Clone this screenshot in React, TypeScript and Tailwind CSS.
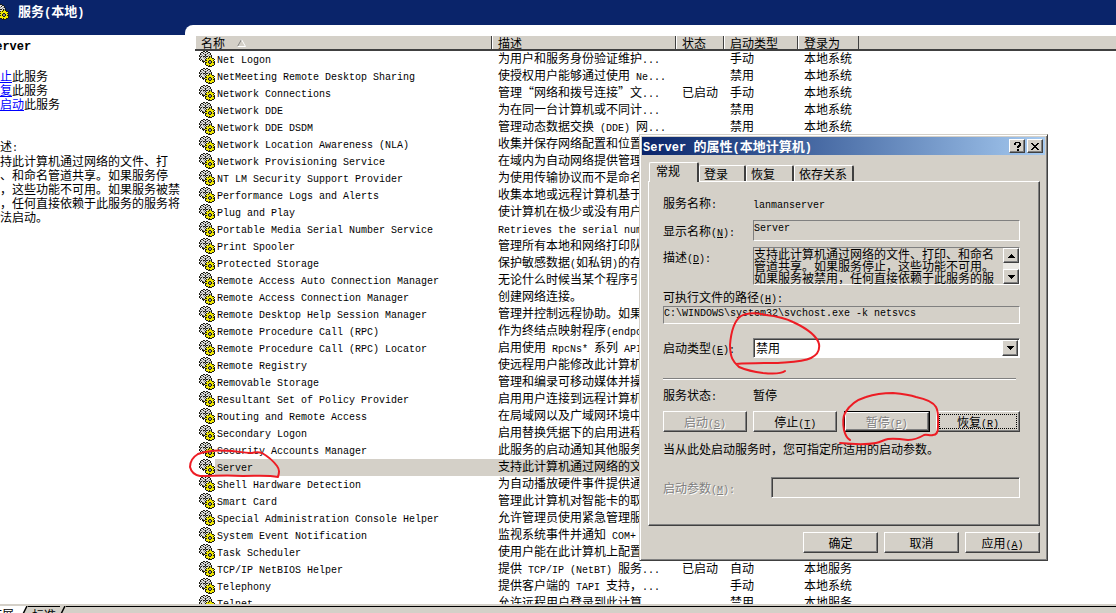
import React from 'react';
import clsx from 'clsx';

type Service = {
  name: string;
  desc: string;
  status?: string;
  startup?: string;
  logon?: string;
};

const services: Service[] = [
  { name: 'Net Logon', desc: '为用户和服务身份验证维护...', startup: '手动', logon: '本地系统' },
  { name: 'NetMeeting Remote Desktop Sharing', desc: '使授权用户能够通过使用 Ne...', startup: '禁用', logon: '本地系统' },
  { name: 'Network Connections', desc: '管理“网络和拨号连接”文...', status: '已启动', startup: '手动', logon: '本地系统' },
  { name: 'Network DDE', desc: '为在同一台计算机或不同计...', startup: '禁用', logon: '本地系统' },
  { name: 'Network DDE DSDM', desc: '管理动态数据交换 (DDE) 网...', startup: '禁用', logon: '本地系统' },
  { name: 'Network Location Awareness (NLA)', desc: '收集并保存网络配置和位置' },
  { name: 'Network Provisioning Service', desc: '在域内为自动网络提供管理' },
  { name: 'NT LM Security Support Provider', desc: '为使用传输协议而不是命名' },
  { name: 'Performance Logs and Alerts', desc: '收集本地或远程计算机基于' },
  { name: 'Plug and Play', desc: '使计算机在极少或没有用户' },
  { name: 'Portable Media Serial Number Service', desc: 'Retrieves the serial num' },
  { name: 'Print Spooler', desc: '管理所有本地和网络打印队' },
  { name: 'Protected Storage', desc: '保护敏感数据(如私钥)的存' },
  { name: 'Remote Access Auto Connection Manager', desc: '无论什么时候当某个程序引' },
  { name: 'Remote Access Connection Manager', desc: '创建网络连接。' },
  { name: 'Remote Desktop Help Session Manager', desc: '管理并控制远程协助。如果' },
  { name: 'Remote Procedure Call (RPC)', desc: '作为终结点映射程序(endpo' },
  { name: 'Remote Procedure Call (RPC) Locator', desc: '启用使用 RpcNs* 系列 API' },
  { name: 'Remote Registry', desc: '使远程用户能修改此计算机' },
  { name: 'Removable Storage', desc: '管理和编录可移动媒体并操' },
  { name: 'Resultant Set of Policy Provider', desc: '启用用户连接到远程计算机' },
  { name: 'Routing and Remote Access', desc: '在局域网以及广域网环境中' },
  { name: 'Secondary Logon', desc: '启用替换凭据下的启用进程' },
  { name: 'Security Accounts Manager', desc: '此服务的启动通知其他服务' },
  { name: 'Server', desc: '支持此计算机通过网络的文' },
  { name: 'Shell Hardware Detection', desc: '为自动播放硬件事件提供通' },
  { name: 'Smart Card', desc: '管理此计算机对智能卡的取' },
  { name: 'Special Administration Console Helper', desc: '允许管理员使用紧急管理服' },
  { name: 'System Event Notification', desc: '监视系统事件并通知 COM+' },
  { name: 'Task Scheduler', desc: '使用户能在此计算机上配置' },
  { name: 'TCP/IP NetBIOS Helper', desc: '提供 TCP/IP (NetBT) 服务...', status: '已启动', startup: '自动', logon: '本地服务' },
  { name: 'Telephony', desc: '提供客户端的 TAPI 支持，...', startup: '手动', logon: '本地系统' },
  { name: 'Telnet', desc: '允许远程用户登录到此计算', startup: '禁用', logon: '本地服务' },
];

const raised =
  'border border-t-white border-l-white border-r-[#404040] border-b-[#404040] shadow-[inset_-1px_-1px_0_#808080] bg-[#d4d0c8]';
const sunkenThin = 'border border-t-[#808080] border-l-[#808080] border-r-white border-b-white bg-[#d4d0c8]';
const sunken =
  'border border-t-[#808080] border-l-[#808080] border-r-white border-b-white shadow-[inset_1px_1px_0_#404040]';

// Half-width runs are set in the mono face so that two of them fill one ideograph
const Mixed = ({ text, bold = false }: { text: string; bold?: boolean }) => (
  <>
    {text.split(/([\x20-\x7e]+)/).map((part, i) =>
      i % 2 === 1 ? (
        <span
          key={i}
          className={clsx(
            "leading-none whitespace-pre font-['Liberation_Mono',monospace]",
            bold ? 'text-[12px]' : 'text-[10px]'
          )}
        >
          {part}
        </span>
      ) : (
        part
      )
    )}
  </>
);

const Accel = ({ label, letter, colon = false }: { label: string; letter: string; colon?: boolean }) => (
  <>
    {label}
    <span className="font-['Liberation_Mono',monospace] text-[10px] leading-none">
      (<u>{letter}</u>){colon && ':'}
    </span>
  </>
);

const gearBitmap = [
  '....kk.kk.......',
  '..kkwwkwwkk.....',
  '.kwwkwwwkwwk....',
  '.kgwwgkgwwgk....',
  'kwwgwwkwwgwwk...',
  'kgkwkkgkkwkgk...',
  '.kwwgwkwwykyk...',
  'kgwwwgwkykyyykk.',
  'kwkwwwkyyyyyyyyk',
  '.k.kgwkkyykkyyk.',
  '...kkkyyykggkyyk',
  '....k.kkykggkykk',
  '......kyyykkyyyk',
  '......kyyyyyyyyk',
  '.......kkykyykk.',
  '.........kkkk...',
];

const gearColours: Record<string, string> = { k: '#1c1c14', g: '#8c8c8c', w: '#dcdcdc', y: '#f0e800' };

const gearPaths = Object.keys(gearColours).map((key) => ({
  fill: gearColours[key],
  d: gearBitmap
    .flatMap((row, y) => [...row].map((c, x) => (c === key ? `M${x} ${y}h1v1h-1z` : '')))
    .join(''),
}));

const GearIcon = () => (
  <svg viewBox="0 0 16 16" className="h-4 w-4 shrink-0" shapeRendering="crispEdges" aria-hidden="true">
    {gearPaths.map((p) => (
      <path key={p.fill} d={p.d} fill={p.fill} />
    ))}
  </svg>
);

const Arrow = ({ up = false }: { up?: boolean }) => (
  <svg viewBox="0 0 7 4" className="h-1 w-[7px]" shapeRendering="crispEdges" aria-hidden="true">
    <path d={up ? 'M3 0h1v1h1v1h1v1h1v1H0V3h1V2h1V1h1z' : 'M0 0h7v1H6v1H5v1H4v1H3V3H2V2H1V1H0z'} fill="#000" />
  </svg>
);

const DetailPane = () => (
  <aside className="w-[185px] shrink-0 overflow-hidden bg-white pt-[3px]">
    <div className="-ml-3 leading-[14px] whitespace-nowrap">
      <h2 className="font-bold">
        <Mixed text="Server" bold />
      </h2>
      <div className="mt-4">
        <p><a href="#stop" className="text-[#0000ff] underline">停止</a>此服务</p>
        <p><a href="#resume" className="text-[#0000ff] underline">恢复</a>此服务</p>
        <p><a href="#restart" className="text-[#0000ff] underline">重启动</a>此服务</p>
      </div>
      <div className="mt-7">
        <p><Mixed text="描述:" /></p>
        <p>
          支持此计算机通过网络的文件、打<br />
          印、和命名管道共享。如果服务停<br />
          止，这些功能不可用。如果服务被禁<br />
          用，任何直接依赖于此服务的服务将<br />
          无法启动。
        </p>
      </div>
    </div>
  </aside>
);

const headCell =
  'h-[15px] border-b-2 border-b-[#404040] bg-[#d4d0c8] p-0 pl-[6px] text-left font-normal leading-[13px]';
const headSplit = 'shadow-[inset_-1px_0_0_#404040,inset_1px_0_0_#ffffff]';

const ServiceTable = () => (
  <table className="w-full table-fixed border-separate border-spacing-0 whitespace-nowrap">
    <colgroup>
      <col className="w-[297px]" />
      <col className="w-[184px]" />
      <col className="w-[48px]" />
      <col className="w-[74px]" />
      <col className="w-[61px]" />
      <col />
    </colgroup>
    <thead>
      <tr>
        <th className={clsx(headCell, headSplit)}>
          <span className="flex items-center gap-3">
            名称
            <svg viewBox="0 0 9 8" className="h-2 w-[9px]" aria-hidden="true">
              <path d="M4.5 0.5L0.5 7.5" stroke="#808080" fill="none" />
              <path d="M4.5 0.5L8.5 7.5H0.5" stroke="#fff" fill="none" />
            </svg>
          </span>
        </th>
        <th className={clsx(headCell, headSplit)}>描述</th>
        <th className={clsx(headCell, headSplit)}>状态</th>
        <th className={clsx(headCell, headSplit)}>启动类型</th>
        <th className={clsx(headCell, headSplit)}>登录为</th>
        <th className={headCell} aria-hidden="true" />
      </tr>
    </thead>
    <tbody>
      {services.map((s) => {
        const selected = s.name === 'Server';
        const cell = clsx(
          'h-[17px] overflow-hidden p-0 pl-[6px] align-top leading-[14px]',
          selected && 'bg-[#d4d0c8]'
        );
        return (
          <tr key={s.name}>
            <td className="h-[17px] p-0 pl-1 align-top">
              <div className="flex h-[17px] items-start">
                <GearIcon />
                <span className={clsx('h-[17px] flex-1 pl-[2px] leading-[14px]', selected && 'bg-[#d4d0c8]')}>
                  <Mixed text={s.name} />
                </span>
              </div>
            </td>
            <td className={cell}><Mixed text={s.desc} /></td>
            <td className={cell}>{s.status}</td>
            <td className={cell}>{s.startup}</td>
            <td className={cell}>{s.logon}</td>
            <td className="p-0" />
          </tr>
        );
      })}
    </tbody>
  </table>
);

const ViewTabs = () => (
  <footer className="flex h-[9px] shrink-0 overflow-hidden border-t-2 border-t-[#d4d0c8] bg-[#d4d0c8]">
    <button className="-ml-[10px] h-4 shrink-0 bg-white pr-2 leading-4">扩展</button>
    <svg viewBox="0 0 6 8" className="h-2 w-[6px] shrink-0" aria-hidden="true">
      <path d="M0 0H5L1 8H0z" fill="#fff" />
      <path d="M5 0L1 8" stroke="#000" strokeWidth="1.5" fill="none" />
    </svg>
    <button className="h-4 shrink-0 border-t border-t-black px-1 leading-[14px]">标准</button>
    <svg viewBox="0 0 6 8" className="h-2 w-[6px] shrink-0" aria-hidden="true">
      <path d="M5 0L1 8" stroke="#000" strokeWidth="1.5" fill="none" />
    </svg>
    <div className="flex-1 border-t border-t-black" />
  </footer>
);

const tabBase = 'border-t border-l border-t-white border-l-white border-r-2 border-r-[#404040] rounded-t-[2px] text-left';
const pushButton = 'h-[21px] text-center leading-[17px]';
const disabledText = 'text-[#808080] [text-shadow:1px_1px_0_#ffffff]';

const PropertiesDialog = () => (
  <section
    role="dialog"
    aria-labelledby="dialog-title"
    className="absolute top-[134px] left-[639px] w-[409px] border border-t-[#d4d0c8] border-l-[#d4d0c8] border-r-[#404040] border-b-[#404040] bg-[#d4d0c8] p-[2px] pb-[7px] shadow-[inset_1px_1px_0_#ffffff,inset_-1px_-1px_0_#808080]"
  >
    <header className="flex h-[18px] items-center gap-[2px] bg-gradient-to-r from-[#0a246a] to-[#a6caf0] pr-[2px] pl-px">
      <h1 id="dialog-title" className="flex-1 text-[13px] leading-4 font-bold text-white">
        <Mixed text="Server 的属性(本地计算机)" bold />
      </h1>
      <button aria-label="帮助" className={clsx('flex h-[14px] w-4 items-center justify-center', raised)}>
        <svg viewBox="0 0 7 9" className="h-[9px] w-[7px]" shapeRendering="crispEdges" aria-hidden="true">
          <path d="M1 0h5v1h1v3H6v1H5v1H3V4h1V3h1V1H2v2H0V1h1zM3 7h2v2H3z" fill="#000" />
        </svg>
      </button>
      <button aria-label="关闭" className={clsx('flex h-[14px] w-4 items-center justify-center', raised)}>
        <svg viewBox="0 0 8 7" className="h-[7px] w-2" shapeRendering="crispEdges" aria-hidden="true">
          <path d="M0 0h2v1h1v1h2V1h1V0h2v1H7v1H6v1H5v1h1v1h1v1h1v1H6V6H5V5H3v1H2v1H0V6h1V5h1V4h1V3H2V2H1V1H0z" fill="#000" />
        </svg>
      </button>
    </header>

    <div className="pt-[7px] pr-[5px] pl-[6px]">
      <div role="tablist" className="flex items-end pl-px">
        <button role="tab" aria-selected="true" className={clsx(tabBase, 'relative -mb-px h-5 w-[50px] bg-[#d4d0c8] pb-1 pl-[6px] leading-4')}>
          常规
        </button>
        <button role="tab" className={clsx(tabBase, 'h-4 w-[47px] pl-1 leading-[14px]')}>登录</button>
        <button role="tab" className={clsx(tabBase, 'h-4 w-12 pl-1 leading-[14px]')}>恢复</button>
        <button role="tab" className={clsx(tabBase, 'h-4 w-[60px] pl-1 leading-[14px]')}>依存关系</button>
      </div>

      <div className={clsx('pt-[13px] pr-[19px] pb-[27px] pl-[14px]', raised)}>
        <div className="flex h-4 items-center">
          <span className="w-[90px]"><Mixed text="服务名称:" /></span>
          <span className="leading-4"><Mixed text="lanmanserver" /></span>
        </div>

        <div className="mt-[9px] flex h-[21px] items-center">
          <label htmlFor="display-name" className="w-[90px]"><Accel label="显示名称" letter="N" colon /></label>
          <input
            id="display-name"
            readOnly
            value="Server"
            className={clsx("h-[21px] min-w-0 flex-1 pb-1 font-['Liberation_Mono',monospace] text-[10px]", sunkenThin)}
          />
        </div>

        <div className="mt-[6px] flex h-[38px]">
          <label htmlFor="description" className="w-[90px] leading-5"><Accel label="描述" letter="D" colon /></label>
          <div className={clsx('flex min-w-0 flex-1', sunkenThin)}>
            <textarea
              id="description"
              readOnly
              className="h-9 min-w-0 flex-1 resize-none overflow-hidden leading-3"
              value={'支持此计算机通过网络的文件、打印、和命名\n管道共享。如果服务停止，这些功能不可用。\n如果服务被禁用，任何直接依赖于此服务的服'}
            />
            <div className="flex w-4 flex-col justify-between bg-[#ebe9e4]">
              <button aria-label="向上" className={clsx('flex h-[15px] items-center justify-center', raised)}><Arrow up /></button>
              <button aria-label="向下" className={clsx('flex h-[15px] items-center justify-center', raised)}><Arrow /></button>
            </div>
          </div>
        </div>

        <label htmlFor="path" className="mt-1 block h-4 leading-4"><Accel label="可执行文件的路径" letter="H" colon /></label>
        <input
          id="path"
          readOnly
          value="C:\WINDOWS\system32\svchost.exe -k netsvcs"
          className={clsx("mt-px block h-[18px] w-full pb-1 font-['Liberation_Mono',monospace] text-[10px]", sunkenThin)}
        />

        <div className="mt-[14px] flex h-5 items-center">
          <label htmlFor="startup" className="w-[90px]"><Accel label="启动类型" letter="E" colon /></label>
          <div className={clsx('flex h-5 min-w-0 flex-1 bg-white p-px', sunken)}>
            <select id="startup" className="min-w-0 flex-1 appearance-none bg-transparent pl-px leading-[14px]">
              <option>禁用</option>
            </select>
            <span className={clsx('pointer-events-none flex w-4 items-center justify-center', raised)}><Arrow /></span>
          </div>
        </div>

        <hr className="mt-5 mr-1 h-[2px] border-t border-b border-t-[#808080] border-b-white" />

        <div className="mt-[7px] flex h-4 items-center">
          <span className="w-[90px]"><Mixed text="服务状态:" /></span>
          <span>暂停</span>
        </div>

        <div className="mt-2 flex justify-between">
          <button disabled className={clsx(pushButton, raised, disabledText, 'w-[84px]')}><Accel label="启动" letter="S" /></button>
          <button className={clsx(pushButton, raised, 'w-[84px]')}><Accel label="停止" letter="T" /></button>
          <div className="w-[86px] border border-black">
            <button disabled className={clsx('block h-[19px] w-full text-center leading-[15px]', raised, disabledText)}>
              <Accel label="暂停" letter="P" />
            </button>
          </div>
          <button className={clsx(pushButton, raised, 'w-[84px] p-[2px]')}>
            <span className="block h-[15px] border border-dotted border-black leading-[13px]"><Accel label="恢复" letter="R" /></span>
          </button>
        </div>

        <p className="mt-[9px] leading-4">当从此处启动服务时，您可指定所适用的启动参数。</p>

        <div className="mt-5 flex h-[21px] items-center">
          <label htmlFor="params" className={clsx('w-[108px]', disabledText)}><Accel label="启动参数" letter="M" colon /></label>
          <input id="params" disabled className={clsx('h-[21px] min-w-0 flex-1 bg-[#d4d0c8]', sunken)} />
        </div>
      </div>

      <div className="mt-[6px] flex justify-end gap-[6px]">
        <button className={clsx(pushButton, raised, 'w-[75px]')}>确定</button>
        <button className={clsx(pushButton, raised, 'w-[75px]')}>取消</button>
        <button className={clsx(pushButton, raised, 'w-[75px]')}><Accel label="应用" letter="A" /></button>
      </div>
    </div>
  </section>
);

// Hand-drawn red pen marks
const PenMarks = () => (
  <svg
    width="1116"
    height="613"
    viewBox="0 0 1116 613"
    className="pointer-events-none absolute top-0 left-0"
    fill="none"
    stroke="#ed1c24"
    strokeWidth="2"
    strokeLinecap="round"
    strokeLinejoin="round"
    aria-hidden="true"
  >
    <path d="M198 454C208 450 222 450 232 451C240 452 246 453 252 453C256 452 259 452 262 453C269 457 274 462 277 466C280 470 279 473 278 477C268 475 258 476 243 476C228 475 212 476 200 476C194 475 191 471 190 467C190 461 193 457 198 454" />
    <path d="M736 364C750 363 764 363 778 363C791 362 803 362 811 358C817 355 820 350 819 344C817 336 808 329 793 322C783 317 775 316 766 315C758 313 748 312 741 316C734 321 731 332 730 345C730 357 733 362 739 367C746 370 755 372 763 373C773 374 781 374 785 371" />
    <path d="M850 440C846 438 845 434 844 430C843 424 843 417 845 413C849 406 856 400 866 397C875 394 885 393 893 393C903 394 910 395 916 397C926 399 933 402 936 407C939 412 938 420 938 427C938 433 936 435 933 435C930 436 927 434 924 435C919 438 915 440 908 440C901 439 894 438 888 439C883 440 881 442 876 443C865 445 850 444 840 443" />
  </svg>
);

const App = () => {
  return (
    <div className="relative flex h-screen flex-col overflow-hidden bg-white font-['Noto_Sans_CJK_SC',sans-serif] text-[12px] text-black">
      <header className="flex h-[25px] shrink-0 items-start bg-[#0a246a] pt-1">
        <div className="-ml-[7px]"><GearIcon /></div>
        <h1 className="ml-[9px] text-[13px] leading-none font-bold text-white">
          <Mixed text="服务(本地)" bold />
        </h1>
      </header>
      <div className="flex min-h-0 flex-1 bg-[#0a246a]">
        <div className="flex pt-[10px]">
          <DetailPane />
        </div>
        <main className="min-w-0 flex-1 overflow-hidden rounded-tl-[8px] bg-white pt-[11px] pl-[10px]">
          <ServiceTable />
        </main>
      </div>
      <ViewTabs />
      <PropertiesDialog />
      <PenMarks />
    </div>
  );
};

export default App;
